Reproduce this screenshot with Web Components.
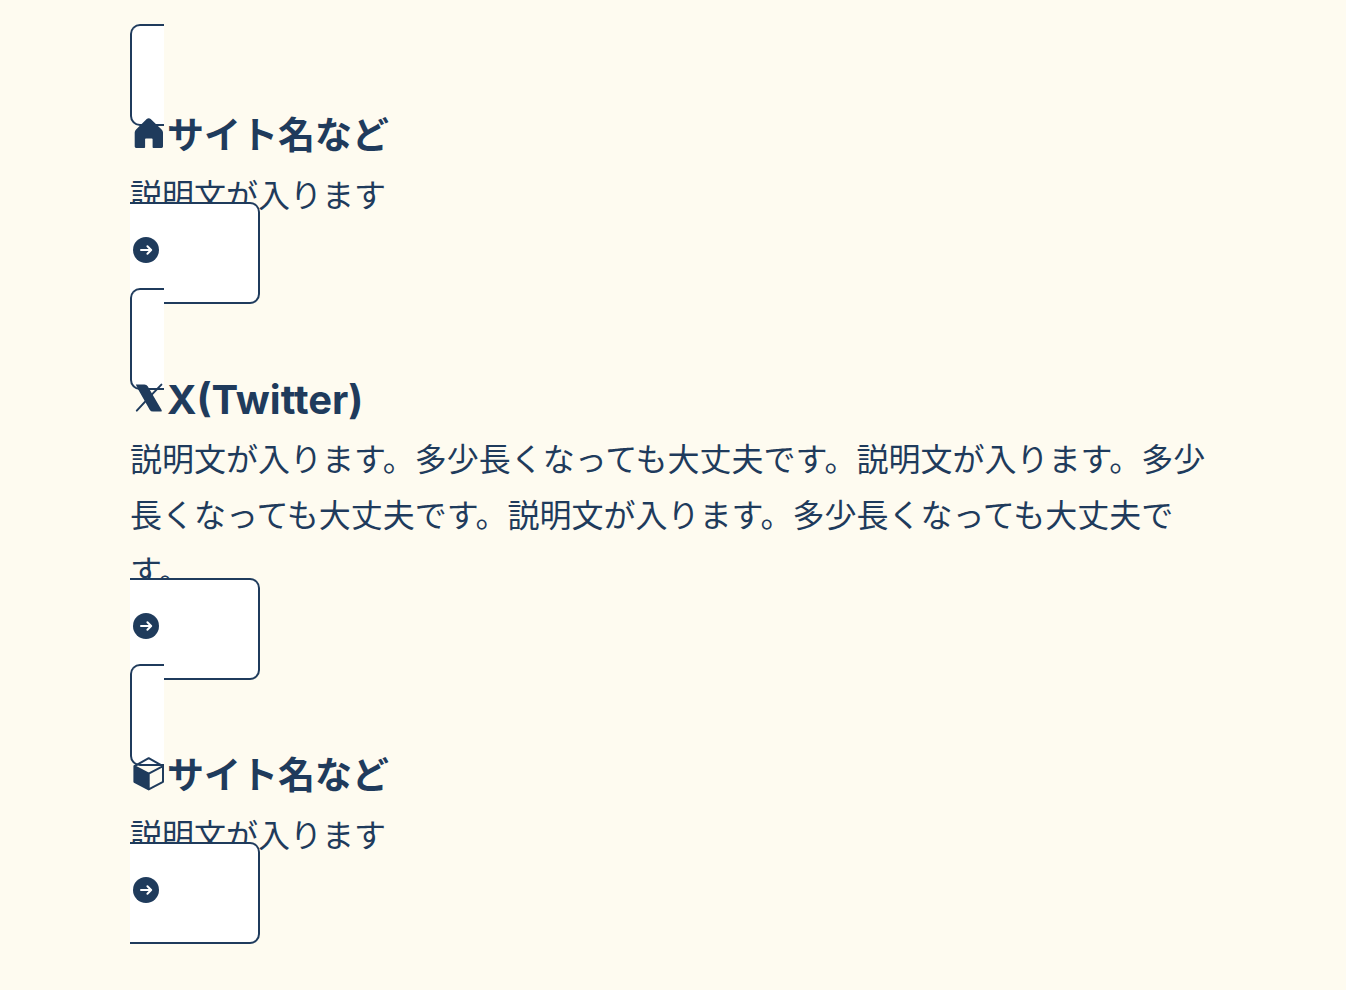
<!DOCTYPE html>
<html lang="ja">
<head>
<meta charset="utf-8">
<meta name="viewport" content="width=device-width, initial-scale=1">
<title>リンク集</title>
<style>
  body {
    --link-ink: #1f3b5c;
    --link-bg: #fff;
    margin: 0;
    background: #fefbf0;
    color: var(--link-ink);
    font-family: Inter, "Noto Sans CJK JP", sans-serif;
  }
</style>
</head>
<body>
<link-list>
  <link-card href="#site">
    <site-icon slot="icon" name="home"></site-icon>
    <span slot="title">サイト名など</span>
    説明文が入ります
  </link-card>
  <link-card href="#twitter">
    <site-icon slot="icon" name="x"></site-icon>
    <span slot="title" lang="en">X(Twitter)</span>
    説明文が入ります。多少長くなっても大丈夫です。説明文が入ります。多少長くなっても大丈夫です。説明文が入ります。多少長くなっても大丈夫です。
  </link-card>
  <link-card href="#box">
    <site-icon slot="icon" name="cube"></site-icon>
    <span slot="title">サイト名など</span>
    説明文が入ります
  </link-card>
</link-list>

<script>
/* <link-list>, <link-card>, <site-icon> */

const icons = {
  home: '<path fill="currentColor" d="M16.7 4.1 Q18.7 2.2 20.7 4.1 L31.6 14.4 Q33 15.8 33 17.6 V31.6 Q33 33 31.6 33 H23.4 Q22.6 33 22.6 32.2 V24.2 Q22.6 23.4 21.8 23.4 H15.9 Q15.1 23.4 15.1 24.2 V32.2 Q15.1 33 14.3 33 H6.1 Q4.7 33 4.7 31.6 V17.6 Q4.7 15.8 6.1 14.4 Z"/>',
  x: '<path fill="currentColor" d="M5.8 4.4 H14.4 Q16.6 4.4 17.7 6.3 L31.6 30 Q32.4 31.6 31 31.6 H23 Q20.8 31.6 19.7 29.7 L8.2 9.6 Q6.6 6.2 5.8 4.4 Z"/><path fill="none" stroke="currentColor" stroke-width="2" stroke-linecap="round" d="M31.4 4.6 L20.8 15.6 M17 19.6 L6.8 30.6"/>',
  cube: '<path fill="none" stroke="currentColor" stroke-width="2" stroke-linejoin="round" d="M18.7 3.2 L33 11.2 V26.8 L18.7 34.4 L4.4 26.8 V11.2 Z M4.4 11.2 L18.7 18.6 L33 11.2 M18.7 18.6 V34.4"/><path fill="currentColor" d="M4.4 11.2 L18.7 18.6 V34.4 L4.4 26.8 Z"/>'
};

class SiteIcon extends HTMLElement {
  constructor() {
    super();
    this.attachShadow({ mode: 'open' });
  }
  connectedCallback() {
    this.shadowRoot.innerHTML = `
      <style>
        :host { display: inline-block; width: 37px; height: 37px; vertical-align: -3px; }
        svg { display: block; width: 100%; height: 100%; }
      </style>
      <svg viewBox="0 0 37 37" aria-hidden="true">${icons[this.getAttribute('name')] || ''}</svg>
    `;
  }
}
customElements.define('site-icon', SiteIcon);


const templateCard = document.createElement('template');
templateCard.innerHTML = `
  <style>
    :host {
      display: block;
      font-size: 32px;
      line-height: 56px;
    }
    /* the link stays inline, its frame is split around the blocks inside */
    a {
      color: inherit;
      text-decoration: none;
      background: var(--link-bg);
      border: 2px solid var(--link-ink);
      border-radius: 10px;
      padding: 30px 96px 29px 32px;
    }
    .title {
      font-size: 37px;
      font-weight: 700;
      line-height: 64px;
      height: 64px;
    }
    ::slotted([lang="en"]) { font-size: 40px; }
    p { margin: 0 0 2px; }
    .arrow {
      width: 32px;
      height: 32px;
      vertical-align: -1px;
    }
  </style>
  <a part="link"><div class="title"><slot name="icon"></slot><slot name="title"></slot></div><p><slot></slot></p><svg class="arrow" viewBox="0 0 32 32" aria-hidden="true"><circle cx="16" cy="16" r="13" fill="currentColor"/><path d="M11 16 H21 M17.4 12.2 L21.2 16 L17.4 19.8" fill="none" stroke="#fff" stroke-width="2" stroke-linecap="round" stroke-linejoin="round"/></svg></a>
`;

class LinkCard extends HTMLElement {
  constructor() {
    super();
    this.attachShadow({ mode: 'open' });
    this.shadowRoot.appendChild(templateCard.content.cloneNode(true));
    this._link = this.shadowRoot.querySelector('a');
  }
  static get observedAttributes() { return ['href']; }
  attributeChangedCallback(name, oldVal, newVal) {
    this._link.setAttribute('href', newVal);
  }
}
customElements.define('link-card', LinkCard);


const templateList = document.createElement('template');
templateList.innerHTML = `
  <style>
    :host {
      display: flex;
      flex-direction: column;
      gap: 30px;
      padding: 48px 120px 32px 130px;
    }
  </style>
  <slot></slot>
`;

class LinkList extends HTMLElement {
  constructor() {
    super();
    this.attachShadow({ mode: 'open' });
    this.shadowRoot.appendChild(templateList.content.cloneNode(true));
  }
}
customElements.define('link-list', LinkList);
</script>
</body>
</html>
